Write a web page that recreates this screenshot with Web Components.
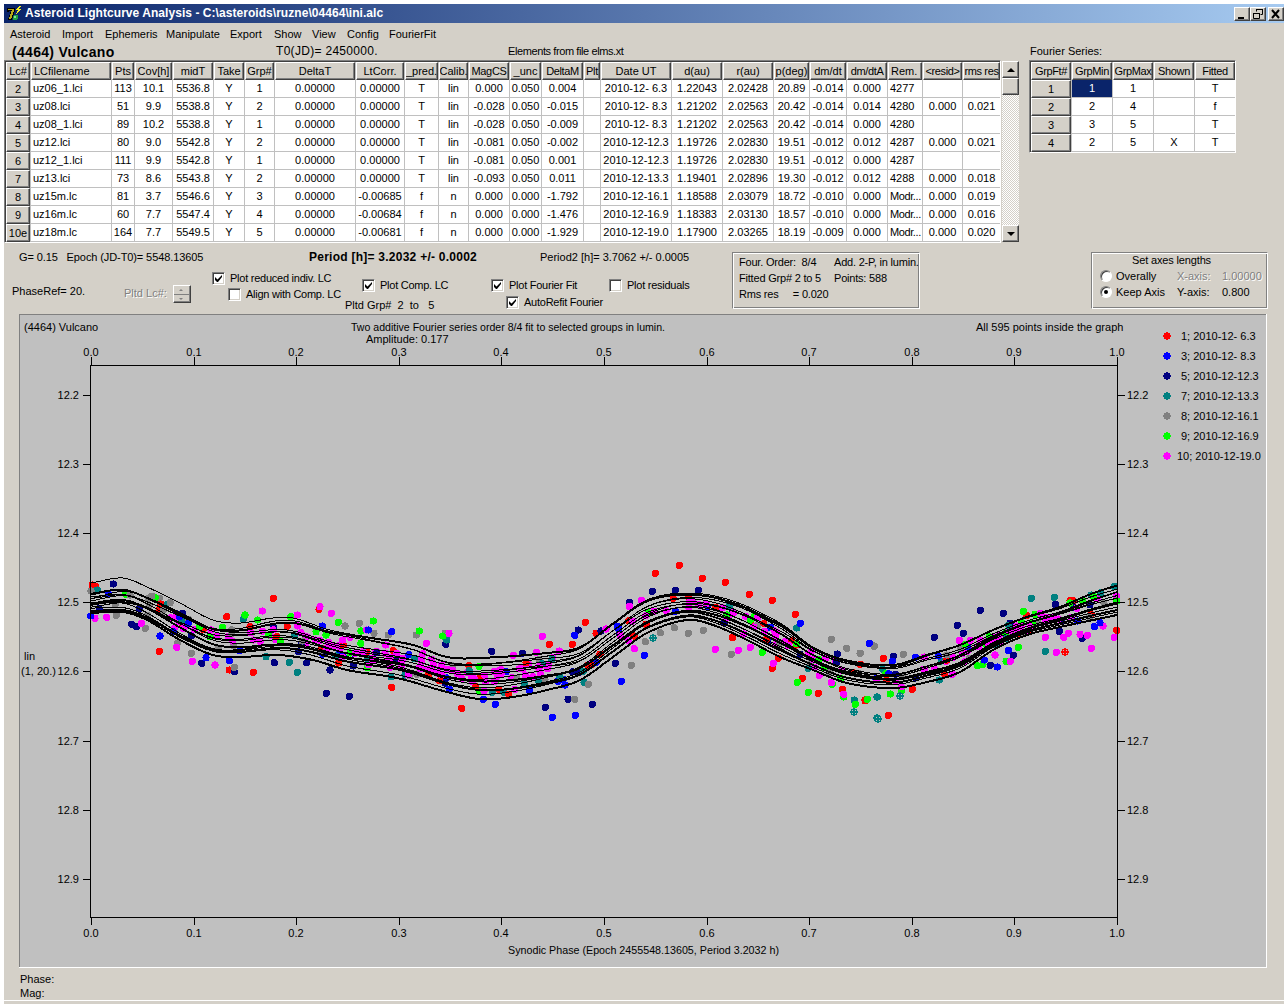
<!DOCTYPE html>
<html><head><meta charset="utf-8"><style>
html,body{margin:0;padding:0;background:#fff;height:1004px;overflow:hidden}
body{font:11px/13px "Liberation Sans",Arial,sans-serif;color:#000}
</style></head><body>
<alc-window>
<title-bar slot="title">Asteroid Lightcurve Analysis - C:\asteroids\ruzne\04464\ini.alc</title-bar>
<menu-bar slot="menu"></menu-bar>
<lc-panel slot="top"></lc-panel>
<ctrl-panel slot="ctrl"></ctrl-panel>
<plot-view slot="plot"></plot-view>
<status-box slot="status"></status-box>
</alc-window>
<script>
function def(name,html,init){customElements.define(name,class extends HTMLElement{
 constructor(){super();const r=this.attachShadow({mode:'open'});r.innerHTML=typeof html==='function'?html():html;if(init)init(r,this);}
});}
const raised='border:1px solid;border-color:#fff #404040 #404040 #fff;box-shadow:inset -1px -1px 0 #808080;background:#d4d0c8;box-sizing:border-box;';
def('alc-window',`<style>:host{display:block;position:relative;margin:4px 4px 0 4px;width:1280px;height:1000px;background:#d4d0c8;overflow:hidden;box-sizing:border-box}
.w{display:flex;flex-direction:column;height:100%}</style>
<div class="w"><slot name="title"></slot><slot name="menu"></slot><slot name="top"></slot><slot name="ctrl"></slot><slot name="plot"></slot><slot name="status"></slot></div>`);

def('title-bar',`<style>:host{display:flex;align-items:center;height:19px;background:linear-gradient(90deg,#0a246a,#a6caf0);color:#fff;font:bold 12px/19px "Liberation Sans",Arial,sans-serif;flex:none}
svg{margin:0 3px 0 2px;flex:none}.t{flex:1;white-space:pre;letter-spacing:.05px}.b{display:flex;margin-right:0}
.k{${raised}width:16px;height:14px;display:block}.k:last-child{margin-left:2px}.k svg{margin:0;display:block}</style>
<svg width="16" height="16" viewBox="0 0 16 16" shape-rendering="crispEdges"><path d="M1 2h8v3L6 14H2l3-9H3v1H1z" fill="#000"/><path d="M2 3h6v2L5 13H3l3-9H2z" fill="#b8a818"/><path d="M13 0 10 4h2l-2 4 5-5h-2l2-3z" fill="#f4f020"/><rect x="7" y="9" width="5" height="5" rx="2" fill="#20a040"/><rect x="8" y="10" width="2" height="2" fill="#80e0a0"/></svg>
<span class="t"><slot></slot></span>
<span class="b">
<span class="k"><svg width="14" height="12" viewBox="0 0 14 12"><rect x="3" y="9" width="6" height="2"/></svg></span>
<span class="k"><svg width="14" height="12" viewBox="0 0 14 12" fill="none" stroke="#000"><path d="M5.500 3.500v-2h6v5h-2M5 1.500h7"/><path d="M2.500 5.500h6v5h-6zM2 5.500h7"/></svg></span>
<span class="k"><svg width="14" height="12" viewBox="0 0 14 12" stroke="#000" stroke-width="2"><path d="M3 2l7 8M10 2l-7 8"/></svg></span>
</span>`);

def('menu-bar',()=>`<style>:host{display:flex;height:18px;align-items:center;padding:2px 0 0 6px;box-sizing:border-box;flex:none;margin-top:1px}
span{white-space:pre;flex:none}</style>`+[['Asteroid',52],['Import',43],['Ephemeris',61],['Manipulate',64],['Export',44],['Show',38],['View',35],['Config',42],['FourierFit',60]].map(s=>`<span style="width:${s[1]}px">${s[0]}</span>`).join(''));

/* data grid */
const cellCss=`.g{display:grid;background:#c0c0c0;border:1px solid;border-color:#808080 #fff #fff #808080;box-shadow:inset 1px 1px 0 #404040;padding:1px 0 0 1px;column-gap:1px;row-gap:0;width:max-content}
.h{height:18px;display:flex;align-items:center;justify-content:center;white-space:pre;overflow:hidden;box-sizing:border-box;${raised}}
.h.f{justify-content:flex-start;padding-left:2px}
.h.n{letter-spacing:-.35px}
.c{background:#fff;height:17px;margin-bottom:1px;line-height:17px;text-align:center;white-space:pre;overflow:hidden;box-sizing:border-box}
.l{text-align:left;padding-left:2px}.tight{letter-spacing:-.4px}
.sel{background:#0a246a;color:#fff}`;
const W=[24,80,22,37,40,30,29,80,48,33,29,40,31,41,16,70,50,50,35,36,40,34,39,37];
const H=['Lc#','LCfilename','Pts','Cov[h]','midT','Take','Grp#','DeltaT','LtCorr.','_pred.','Calib.','MagCS','_unc','DeltaM','Plt','Date UT','d(au)','r(au)','p(deg)','dm/dt','dm/dtA','Rem.','<resid>','rms res'];
const R=[
['2','uz06_1.lci','113','10.1','5536.8','Y','1','0.00000','0.00000','T','lin','0.000','0.050','0.004','','2010-12- 6.3','1.22043','2.02428','20.89','-0.014','0.000','4277','',''],
['3','uz08.lci','51','9.9','5538.8','Y','2','0.00000','0.00000','T','lin','-0.028','0.050','-0.015','','2010-12- 8.3','1.21202','2.02563','20.42','-0.014','0.014','4280','0.000','0.021'],
['4','uz08_1.lci','89','10.2','5538.8','Y','1','0.00000','0.00000','T','lin','-0.028','0.050','-0.009','','2010-12- 8.3','1.21202','2.02563','20.42','-0.014','0.000','4280','',''],
['5','uz12.lci','80','9.0','5542.8','Y','2','0.00000','0.00000','T','lin','-0.081','0.050','-0.002','','2010-12-12.3','1.19726','2.02830','19.51','-0.012','0.012','4287','0.000','0.021'],
['6','uz12_1.lci','111','9.9','5542.8','Y','1','0.00000','0.00000','T','lin','-0.081','0.050','0.001','','2010-12-12.3','1.19726','2.02830','19.51','-0.012','0.000','4287','',''],
['7','uz13.lci','73','8.6','5543.8','Y','2','0.00000','0.00000','T','lin','-0.093','0.050','0.011','','2010-12-13.3','1.19401','2.02896','19.30','-0.012','0.012','4288','0.000','0.018'],
['8','uz15m.lc','81','3.7','5546.6','Y','3','0.00000','-0.00685','f','n','0.000','0.000','-1.792','','2010-12-16.1','1.18588','2.03079','18.72','-0.010','0.000','Modr...','0.000','0.019'],
['9','uz16m.lc','60','7.7','5547.4','Y','4','0.00000','-0.00684','f','n','0.000','0.000','-1.476','','2010-12-16.9','1.18383','2.03130','18.57','-0.010','0.000','Modr...','0.000','0.016'],
['10e','uz18m.lc','164','7.7','5549.5','Y','5','0.00000','-0.00681','f','n','0.000','0.000','-1.929','','2010-12-19.0','1.17900','2.03265','18.19','-0.009','0.000','Modr...','0.000','0.020']];
const esc=s=>s.replace(/&/g,'&amp;').replace(/</g,'&lt;').replace(/>/g,'&gt;');
const lefts=new Set([1,21]);
def('lc-grid',()=>`<style>:host{display:flex}${cellCss}
.sb{width:17px;margin-left:1px;display:flex;flex-direction:column;background:repeating-conic-gradient(#d4d0c8 0 25%,#fff 0 50%) 0 0/2px 2px;height:183px;box-sizing:border-box;border:solid #d4d0c8;border-width:1px 0 1px 0}
.ar{${raised}height:17px;display:flex;align-items:center;justify-content:center;flex:none}.th{${raised}height:17px;flex:none}.sp{flex:1}
.ar i{display:block;width:0;height:0;border:4px solid transparent}.u{border-bottom-color:#000!important;border-top:0!important}.d{border-top-color:#000!important;border-bottom:0!important}</style>
<div class="g" style="grid-template-columns:${W.map(w=>w+'px').join(' ')};height:183px;box-sizing:border-box;align-content:start">
${H.map((h,i)=>`<div class="h ${i==1||i==21?'f':''} ${i>=14&&i!=15&&i<14||i==14||i>=22||i==11||i==13||i==20?'n':''}">${esc(h)}</div>`).join('')}
${R.map(r=>r.map((c,i)=>i==0?`<div class="h">${c}</div>`:`<div class="c ${lefts.has(i)?'l':''} ${c=='Modr...'?'tight':''}">${c}</div>`).join('')).join('')}
</div><div class="sb"><div class="ar"><i class="u"></i></div><div class="th"></div><div class="sp"></div><div class="ar"><i class="d"></i></div></div>`);

def('fs-grid',()=>{const w=[40,40,40,40,40];const hd=['GrpFt#','GrpMin','GrpMax','Shown','Fitted'];
const d=[['1','1','1','','T'],['2','2','4','','f'],['3','3','5','','T'],['4','2','5','X','T']];
return `<style>:host{display:block}${cellCss}</style><div class="g" style="grid-template-columns:${w.map(x=>x+'px').join(' ')}">
${hd.map(h=>`<div class="h n">${h}</div>`).join('')}
${d.map((r,j)=>r.map((c,i)=>i==0?`<div class="h">${c}</div>`:`<div class="c ${i==1&&j==0?'sel':''}">${c}</div>`).join('')).join('')}</div>`});

def('lc-panel',`<style>:host{display:flex;flex:none;height:200px}
.left{width:1025px;flex:none}.head{height:18px;display:flex;align-items:flex-end}
.n{font:bold 14px/15px "Liberation Sans",Arial,sans-serif;letter-spacing:.3px;margin-left:8px;width:264px;flex:none;white-space:pre}
.t0{width:232px;flex:none;font-size:12px;line-height:14px;letter-spacing:.3px;padding-bottom:2px;white-space:pre}.el{flex:none;line-height:15px;padding-bottom:1px;letter-spacing:-.4px;white-space:pre}
.right{flex:none}.fs{height:15px;padding-top:3px;line-height:13px;margin-left:1px}</style>
<div class="left"><div class="head"><span class="n">(4464) Vulcano</span><span class="t0">T0(JD)= 2450000.</span><span class="el">Elements from file elms.xt</span></div><lc-grid></lc-grid></div>
<div class="right"><div class="fs">Fourier Series:</div><fs-grid></fs-grid></div>`);

def('check-box',`<style>:host{display:inline-flex;align-items:center;white-space:pre;letter-spacing:-.25px}
i{display:block;width:13px;height:13px;box-sizing:border-box;border:1px solid;border-color:#808080 #fff #fff #808080;box-shadow:inset 1px 1px 0 #404040,inset -1px -1px 0 #d4d0c8;background:#fff;margin-right:5px;flex:none;position:relative}
svg{position:absolute;left:2px;top:2px;display:none}:host([on]) svg{display:block}</style><i><svg width="7" height="7" viewBox="0 0 7 7"><path d="M0 2v3l2 2h1l4-5V0L2.500 4.500z"/></svg></i><slot></slot>`);

def('radio-btn',`<style>:host{display:inline-flex;align-items:center;white-space:pre}
i{display:block;width:12px;height:12px;border-radius:50%;box-sizing:border-box;background:#fff;border:1px solid;border-color:#808080 #fff #fff #808080;box-shadow:inset 1px 1px 0 #404040;margin-right:4px;position:relative;flex:none}
b{display:none;position:absolute;left:3px;top:3px;width:4px;height:4px;border-radius:50%;background:#000}:host([on]) b{display:block}</style><i><b></b></i><slot></slot>`);

def('group-box',`<style>:host{display:block;box-sizing:border-box;border:1px solid;border-color:#808080 #fff #fff #808080;box-shadow:inset 1px 1px 0 #fff,inset -1px -1px 0 #808080}</style><slot></slot>`);

def('ctrl-panel',`<style>:host{display:flex;flex:none;height:72px}
.a{width:728px;flex:none}.l1{display:flex;height:25px;align-items:flex-end;white-space:pre;box-sizing:border-box;padding-bottom:3px}
.l2{display:flex;height:47px}
.col{display:flex;flex-direction:column;flex:none}
.bold{font:bold 12px/13px "Liberation Sans",Arial,sans-serif;letter-spacing:.25px}
.dis{color:#808080;text-shadow:1px 1px 0 #fff}
.spin{width:18px;height:18px;${raised}display:flex;flex-direction:column;position:relative;margin-left:6px;flex:none}
.spin i{flex:1;display:block;border-bottom:1px solid #808080;position:relative}.spin i:last-child{border:0}
.spin i::after{content:"";position:absolute;left:5px;top:3px;width:0;height:0;border:2px solid transparent;border-top:0;border-bottom:2px solid #808080}
.spin i:last-child::after{border-bottom:0;border-top:2px solid #808080}
.ph{width:208px;display:flex;align-items:flex-start;padding-left:8px;box-sizing:border-box;flex:none;padding-top:18px}
.box{flex:none;height:57px;margin-top:10px;box-sizing:border-box;padding:1px 0 0 6px;white-space:pre;line-height:16px}
.info{width:188px;display:grid;grid-template-columns:95px auto;grid-auto-rows:16px;letter-spacing:-.2px}
.axes{width:177px;margin-left:171px;padding:0 0 0 8px}
.ax{display:grid;grid-template-columns:77px 45px auto;grid-auto-rows:16px;align-items:center}
.cap{text-align:center;padding-right:24px;height:15px;line-height:14px;letter-spacing:-.15px}</style>
<div class="a"><div class="l1"><span style="margin-left:15px;width:290px;letter-spacing:-.1px">G= 0.15   Epoch (JD-T0)= 5548.13605</span><span class="bold" style="width:231px">Period [h]= 3.2032 +/- 0.0002</span><span>Period2 [h]= 3.7062 +/- 0.0005</span></div>
<div class="l2">
<div class="ph"><span style="width:112px">PhaseRef= 20.</span><span class="dis" style="margin-top:2px">Pltd Lc#:</span><span class="spin"><i></i><i></i></span></div>
<div class="col" style="width:133px;padding-top:5px"><check-box on>Plot reduced indiv. LC</check-box><check-box style="margin:3px 0 0 16px">Align with Comp. LC</check-box></div>
<div class="col" style="width:146px;padding-top:12px"><check-box on style="margin-left:17px">Plot Comp. LC</check-box><span style="margin-top:7px;white-space:pre">Pltd Grp#  2  to   5</span></div>
<div class="col" style="width:118px;padding-top:12px"><check-box on>Plot Fourier Fit</check-box><check-box on style="margin:4px 0 0 15px">AutoRefit Fourier</check-box></div>
<div class="col" style="padding-top:12px"><check-box>Plot residuals</check-box></div>
</div></div>
<group-box class="box info"><span>Four. Order:  8/4</span><span>Add. 2-P, in lumin.</span><span>Fitted Grp# 2 to 5</span><span>Points: 588</span><span>Rms res     = 0.020</span></group-box>
<group-box class="box axes"><div class="cap">Set axes lengths</div><div class="ax"><radio-btn>Overally</radio-btn><span class="dis">X-axis:</span><span class="dis">1.00000</span><radio-btn on>Keep Axis</radio-btn><span>Y-axis:</span><span>0.800</span></div></group-box>`);

/* plot */
function lerpTable(tb,x){for(let i=1;i<tb.length;i++){if(x<=tb[i][0]){const a=tb[i-1],b=tb[i];let t=(x-a[0])/(b[0]-a[0]);
  const p0=tb[Math.max(i-2,0)],p3=tb[Math.min(i+1,tb.length-1)];
  const m1=(b[1]-p0[1])/(b[0]-p0[0])*(b[0]-a[0]),m2=(p3[1]-a[1])/(p3[0]-a[0])*(b[0]-a[0]);
  const t2=t*t,t3=t2*t;return (2*t3-3*t2+1)*a[1]+(t3-2*t2+t)*m1+(-2*t3+3*t2)*b[1]+(t3-t2)*m2;}}
 return tb[tb.length-1][1];}
const TOP=[[91,583],[123,578],[147,587],[180,603],[213,620],[240,623],[273,618],[293,618],[330,630],[373,638],[413,645],[447,657],[480,658],[547,653],[580,647],[613,623],[647,600],[687,593],[730,600],[780,623],[813,647],[847,660],[893,665],[927,655],[960,645],[993,630],[1027,617],[1060,607],[1093,593],[1117,585]];
const BOT=[[91,613],[123,612],[147,620],[180,640],[213,655],[240,657],[277,655],[313,660],[347,670],[397,678],[447,692],[480,699],[513,697],[547,690],[580,680],[613,657],[647,633],[687,620],[713,625],[747,640],[780,657],[813,670],[847,683],[893,688],[927,682],[960,672],[993,650],[1027,635],[1060,627],[1093,620],[1117,615]];
const FAM=[[0,0,1,0,1],[.36,.08,2,0,2],[.40,.14,3,1,1],[.45,.16,2,2,1],[.50,.18,3,3,1],[.55,.2,2,4,1],[.60,.14,4,1,1],[.64,.18,2,5,1],[.68,.14,3,2,1],[.72,.16,2,3,1],[.76,.1,3,4,2],[.80,.1,4,5,1],[.84,.08,3,0,1],[.88,.08,2,1,2],[.93,.06,3,2,1],[1,0,1,0,2]];
function curve(f,x){const u=(x-91)/1026;const T=lerpTable(TOP,x),B=lerpTable(BOT,x);
 let k=f[0]+f[1]*Math.sin(2*Math.PI*f[2]*u+f[3]);k=Math.max(0,Math.min(1,k));
 if(f[0]>0&&f[0]<1){const left=Math.max(0,1-(x-91)/260);const even=(f[0]-.36)/.64*.96+.02;k=k*left+(even+f[1]*.5*Math.sin(2*Math.PI*f[2]*u+f[3]))*(1-left);k=Math.max(0,Math.min(1,k));}
 return T+(B-T)*k;}
const C={r:'#ff0000',b:'#0000ff',n:'#000080',t:'#008080',g:'#808080',l:'#00ff00',m:'#ff00ff'};
const Z7={r:[37,75,580,115,440,170,717,148,238,274,510,200,590,230,725,265,790,255,940,272,1045,344,935,382,1145,445,448,330,520,337,1187,380,370,208,860,275],
n:[100,72,307,160,155,193,170,200,365,310,739,400,808,409,463,335,890,278,1097,253,583,308,680,308,750,330,820,318,655,275],
t:[52,90,490,178,628,307,652,337,768,288,862,295,1100,240,933,350,975,345,1168,332,305,180,558,290],
g:[33,93,150,105,205,115,109,166,196,205,325,178,250,150,292,250,334,280,455,220,463,322,667,243,795,198,838,190,882,220,925,225,1095,220,1009,225,415,265],
l:[495,165,358,200,428,202,532,180,632,170,565,225,602,245,775,187,880,183,843,213,1018,213,1088,228,708,215,738,225,390,230],
m:[45,175,80,172,184,190,290,262,337,304,405,315,393,210,547,153,652,165,720,140,754,160,706,240,810,232,788,240,860,210,917,255,1039,250,1107,220,1145,355,1175,355,985,345,931,322,965,320,825,280,850,275,740,268,950,280,1025,300,1060,315,1085,315,880,300],
b:[32,168,240,228,378,293,448,302,935,215,865,210,727,198,1108,387,298,170,325,190]};
const Z8={r:[598,46,526,70,667,85,736,97,808,133,877,151,946,193,316,217,208,283,348,250,277,283,86,433,333,345,138,338,877,355,967,385,1015,430,1087,418,895,325,1141,343,757,263,1155,450],
n:[517,124,586,121,655,121,448,157,295,240,35,304,127,310,196,472,264,448,337,463,406,340,1072,312,363,243],
t:[950,234,310,364,240,381,175,390,133,400,37,427,312,397,985,355,1123,450,1191,441],
g:[1054,268,1100,295,1141,310,1183,289,754,313,625,250,670,241,583,233,541,248,496,275,454,346,325,403,284,448,111,385,195,388],
l:[847,307,952,397,985,427,1057,403,1091,441,1126,463,1162,448,811,211,741,195],
m:[484,151,448,169,187,259,100,316,169,307,43,395,12,424,706,298,775,301,811,292,880,340,1018,376,1054,398,1091,433,378,237,463,296,833,202,238,303],
b:[961,220,1168,280,493,316,424,394,284,256,217,502,286,496,46,463,148,420,255,405,10,448]};
const Z9={r:[770,181,630,92,640,92,500,137,70,265,157,358,85,436,15,392],
n:[361,121,430,130,292,166,310,190,223,202,586,103,598,184,667,205,460,256,391,286,100,259,450,160,690,104],
t:[514,85,583,82,446,166,556,244,763,49,694,75,722,68,52,381,238,330],
g:[42,228,130,253,0,250,302,235,260,255,688,140,732,100],
l:[490,124,525,133,630,99,668,92,701,80,770,93,316,223,388,200,475,232,438,274,352,287,369,283,91,372,22,388,125,362],
m:[298,211,331,211,541,130,470,168,484,168,556,202,589,247,611,202,625,190,660,193,682,196,694,235,729,168,763,202,451,274,193,261,124,350,277,313,380,215,405,255],
b:[28,220,97,274,166,262,235,258,412,291,445,241,652,153,703,170,720,158,373,270]};
const CROSS=[['t',519,265,480,550],['t',1123,485,480,550],['t',1191,505,480,550],['r',616,245,860,570],['t',53,446,860,570],['t',121,378,860,570]];
def('plot-view',()=>{
 let s=1234567;const rnd=()=>(s=(s*16807)%2147483647)/2147483647;
 const dot=(x,y,c)=>`<circle cx="${x.toFixed(1)}" cy="${y.toFixed(1)}" r="3.6" fill="${C[c]}"/>`;
 let pts='';
 const w={m:4,r:1.5,b:2,n:2,t:1.5,g:1.5,l:1.5};const keys=[];for(const k in w)for(let i=0;i<w[k]*2;i++)keys.push(k);
 for(let i=0;i<190;i++){const x=91+rnd()*1026;const T=lerpTable(TOP,x),B=lerpTable(BOT,x);const y=T+(B-T)*(.12+.76*rnd());let c=keys[Math.floor(rnd()*keys.length)];
  if(x<170&&c=='m')c='g';pts+=dot(x,y,c);}
 for(const [a,b,n] of [[300,550,50],[620,800,20],[950,1100,18],[170,300,10]])for(let i=0;i<n;i++){const x=a+rnd()*(b-a);const T=lerpTable(TOP,x),B=lerpTable(BOT,x);pts+=dot(x,T+(B-T)*(.3+.3*rnd()),'m');}
 for(const [Z,ox,oy] of [[Z7,80,560],[Z8,480,550],[Z9,860,570]])for(const k in Z){const a=Z[k];for(let i=0;i<a.length;i+=2)pts+=dot(ox+a[i]/3,oy+a[i+1]/3,k);}
 for(const [k,a,b,ox,oy] of CROSS){const x=Math.round(ox+a/3),y=Math.round(oy+b/3);pts+=dot(x,y,k)+`<path d="M${x-2} ${y-2}h1v1h-1zM${x+1} ${y-2}h1v1h-1zM${x-2} ${y+1}h1v1h-1zM${x+1} ${y+1}h1v1h-1z" fill="#c0c0c0"/>`;}
 let curves='';for(const f of FAM){let d='';for(let x=91;x<=1117;x+=3)d+=(d?'L':'M')+x+' '+curve(f,x).toFixed(1);curves+=`<path d="${d}" fill="none" stroke="#000" stroke-width="${f[4]}"/>`;}
 let ticks='',labels='';const xs=i=>Math.round(91+102.6*i);
 for(let i=0;i<=10;i++){const x=xs(i),l=(i/10).toFixed(1);ticks+=`M${x+.5} 357v8M${x+.5} 917v8`;
  labels+=`<text x="${x}" y="356" text-anchor="middle">${l}</text><text x="${x}" y="937" text-anchor="middle">${l}</text>`;}
 for(let i=0;i<8;i++){const y=Math.round(395+69.1*i),l=(12.2+i/10).toFixed(1);ticks+=`M83 ${y+.5}h8M1117 ${y+.5}h8`;
  labels+=`<text x="79" y="${y+4}" text-anchor="end">${l}</text><text x="1127" y="${y+4}">${l}</text>`;}
 const leg=[['r','1; 2010-12- 6.3'],['b','3; 2010-12- 8.3'],['n','5; 2010-12-12.3'],['t','7; 2010-12-13.3'],['g','8; 2010-12-16.1'],['l','9; 2010-12-16.9'],['m','10; 2010-12-19.0']];
 const legDots=leg.map((e,i)=>`<circle cx="1167" cy="${336+20*i}" r="3.6" fill="${C[e[0]]}"/>`).join('');
 const legText=leg.map((e,i)=>`<text x="${i==6?1177:1181}" y="${340+20*i}">${e[1]}</text>`).join('');
 return `<style>:host{display:block;flex:none;margin-left:15px;width:1248px;height:654px;background:#c0c0c0}
 svg{display:block;font:11px "Liberation Sans",Arial,sans-serif}</style>
 <svg width="1248" height="654" viewBox="19 314 1248 654">
 <g shape-rendering="crispEdges"><rect x="19" y="314" width="1248" height="1" fill="#808080"/><rect x="19" y="314" width="1" height="654" fill="#808080"/><rect x="19" y="967" width="1248" height="1" fill="#fff"/><rect x="1266" y="314" width="1" height="654" fill="#fff"/>
 ${pts}${curves}<g stroke="#000" fill="none"><path d="${ticks}"/><path d="M90.500 365.500H1117.500V917.500H90.500z"/></g>${legDots}</g>
 <g fill="#000">${labels}${legText}
 <text x="24" y="331">(4464) Vulcano</text>
 <text x="351" y="331" textLength="314" lengthAdjust="spacingAndGlyphs">Two additive Fourier series order 8/4 fit to selected groups in lumin.</text>
 <text x="366" y="343">Amplitude: 0.177</text>
 <text x="976" y="331">All 595 points inside the graph</text>
 <text x="508" y="954" textLength="271" lengthAdjust="spacingAndGlyphs">Synodic Phase (Epoch 2455548.13605, Period 3.2032 h)</text>
 <text x="24" y="660">lin</text><text x="21" y="675">(1, 20.)</text></g>
 </svg>`;
});

def('status-box',`<style>:host{display:block;flex:none;padding:4px 0 0 16px;height:33px;box-sizing:border-box;line-height:14px;border-bottom:1px solid #fff}</style><div>Phase:</div><div>Mag:</div>`);
</script>
</body></html>
